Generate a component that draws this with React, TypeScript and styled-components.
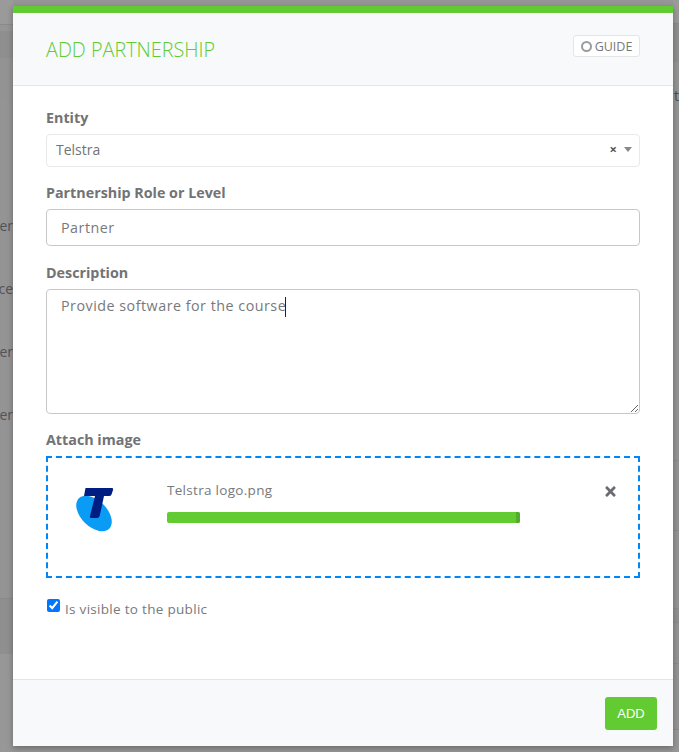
import React from "react";
import styled, { createGlobalStyle } from "styled-components";
import { FaTimes } from "react-icons/fa";

const GlobalStyle = createGlobalStyle`
    html, body {
        margin: 0;
        padding: 0;
        height: 100%;
        overflow: hidden;
        background: #999;
        font-family: "Open Sans", "Liberation Sans", sans-serif;
    }
`;

const Backdrop = styled.div`
    position: relative;
    width: 679px;
    height: 752px;
    overflow: hidden;
    background: #969696;
    display: flex;
    justify-content: space-between;
`;

const PageColumn = styled.div<{ $w: number }>`
    width: ${(p) => p.$w}px;
    display: flex;
    flex-direction: column;
    overflow: hidden;
`;

const Band = styled.div<{ $h: number; $bg: string; $line?: boolean }>`
    height: ${(p) => p.$h}px;
    flex: none;
    box-sizing: border-box;
    background: ${(p) => p.$bg};
    border-top: ${(p) => (p.$line ? "1px solid #8a8a8a" : "0")};
`;

const PageLine = styled.div<{ $h: number }>`
    height: ${(p) => p.$h}px;
    flex: none;
    background: #949494;
    display: flex;
    justify-content: flex-end;
    align-items: flex-end;
    font-size: 14px;
    line-height: 20px;
    white-space: nowrap;
    color: #50535a;
`;

const RightLine = styled(PageLine)`
    justify-content: flex-start;
    padding-left: 1px;
    color: #4a4d55;
`;

const Modal = styled.div`
    position: absolute;
    left: 13px;
    top: 6px;
    width: 660px;
    height: 740px;
    box-sizing: border-box;
    background: #fff;
    border-top: 7px solid #62cb31;
    box-shadow: 0 2px 6px rgba(0, 0, 0, 0.3);
    display: flex;
    flex-direction: column;
`;

const Header = styled.div`
    height: 73px;
    box-sizing: border-box;
    background: #f7f9fa;
    border-bottom: 1px solid #e4e5e7;
    padding: 0 33px;
    display: flex;
    justify-content: space-between;
    align-items: flex-start;
`;

const Title = styled.h4`
    margin: 23px 0 0;
    font-size: 19.8px;
    line-height: 27px;
    font-weight: 300;
    color: #62cb31;
`;

const GuideButton = styled.button`
    margin-top: 22px;
    width: 67px;
    height: 22px;
    padding: 0;
    background: #fff;
    border: 1px solid #e4e5e7;
    border-radius: 3px;
    font-family: inherit;
    font-size: 12.5px;
    color: #77797c;
    display: flex;
    align-items: center;
    justify-content: center;
    gap: 3px;
`;

const GuideDot = styled.span`
    width: 7px;
    height: 7px;
    border: 2px solid #9a9b9d;
    border-radius: 50%;
`;

const Body = styled.div`
    flex: 1;
    padding: 0 33px;
    display: flex;
    flex-direction: column;
`;

const Label = styled.label`
    display: block;
    height: 19px;
    margin-top: 16px;
    margin-bottom: 7px;
    font-size: 14.3px;
    line-height: 19px;
    font-weight: 700;
    color: #717376;
`;

const FirstLabel = styled(Label)`
    margin-top: 22px;
`;

const DescriptionLabel = styled(Label)`
    margin-top: 17px;
`;

const SelectBox = styled.div`
    height: 33px;
    box-sizing: border-box;
    border: 1px solid #e9e9e9;
    border-radius: 4px;
    padding: 0 7px 2px 9px;
    display: flex;
    align-items: center;
    font-size: 14px;
    color: #717376;
`;

const SelectValue = styled.span`
    flex: 1;
`;

const ClearMark = styled.span`
    font-size: 13px;
    font-weight: 700;
    line-height: 1;
    color: #555;
    margin-right: 7px;
`;

const CaretDown = styled.span`
    width: 0;
    height: 0;
    border-left: 4px solid transparent;
    border-right: 4px solid transparent;
    border-top: 5px solid #888;
`;

const TextInput = styled.input`
    display: block;
    width: 100%;
    height: 37px;
    box-sizing: border-box;
    padding: 0 14px;
    border: 1px solid #c8c8c8;
    border-radius: 4px;
    outline: none;
    font-family: inherit;
    font-size: 14.3px;
    letter-spacing: 0.5px;
    color: #77797c;
`;

const AreaWrap = styled.div`
    position: relative;
    height: 125px;
`;

const TextArea = styled.textarea`
    display: block;
    width: 100%;
    height: 125px;
    box-sizing: border-box;
    padding: 4px 14px;
    border: 1px solid #c8c8c8;
    border-radius: 4px;
    outline: none;
    font-family: inherit;
    font-size: 14.3px;
    letter-spacing: 0.5px;
    line-height: 24px;
    color: #77797c;
`;

const TextCaret = styled.span`
    position: absolute;
    left: 239px;
    top: 8px;
    width: 1px;
    height: 20px;
    background: #222;
`;

const DropZone = styled.div`
    height: 122px;
    box-sizing: border-box;
    border: 2px dashed #0087f7;
    display: flex;
    align-items: flex-start;
`;

const Thumb = styled.svg`
    width: 40px;
    height: 46px;
    margin: 29px 0 0 27px;
    flex: none;
`;

const FileBlock = styled.div`
    margin: 23px 0 0 52px;
    width: 353px;
    flex: none;
`;

const FileName = styled.div`
    font-size: 13.5px;
    letter-spacing: 0.3px;
    line-height: 18px;
    color: #77797c;
`;

const Progress = styled.div`
    margin-top: 13px;
    height: 11px;
    border-radius: 2px;
    background: #62cb31;
    overflow: hidden;
    display: flex;
    justify-content: flex-end;
`;

const ProgressEnd = styled.span`
    width: 4px;
    background: #52ad28;
`;

const RemoveButton = styled.button`
    margin: 26px 0 0 83px;
    padding: 0;
    border: 0;
    background: none;
    color: #6a6c6f;
    display: flex;
`;

const CheckRow = styled.label`
    margin-top: 21px;
    display: flex;
    align-items: flex-start;
    font-size: 13.5px;
    letter-spacing: 0.3px;
    line-height: 20px;
    color: #77797c;
`;

const CheckBox = styled.input`
    width: 13px;
    height: 13px;
    margin: 0 5px 0 1px;
    accent-color: #0075ff;
`;

const Footer = styled.div`
    height: 67px;
    box-sizing: border-box;
    background: #f7f9fa;
    border-top: 1px solid #e4e5e7;
    padding: 17px 16px 0 0;
    display: flex;
    justify-content: flex-end;
    align-items: flex-start;
`;

const AddButton = styled.button`
    width: 52px;
    height: 33px;
    padding: 0;
    background: #62cb31;
    border: 0;
    border-radius: 3px;
    font-family: "Liberation Sans", Arial, sans-serif;
    font-size: 13px;
    color: #fff;
`;

const TelstraLogo = () => (
    <Thumb viewBox="0 0 40 46">
        <ellipse cx="19" cy="26.5" rx="21.5" ry="13" fill="#0a9bf5" transform="rotate(45 19 26.5)" />
        <path
            d="M10.5 1 H37 Q38.5 1 38 3 L36.5 7.5 Q36 9 34 9 H29 L24.8 28.5 Q24.2 31 22 31 H16 Q14.6 31 15 29 L20 9 H9 Z"
            fill="#001e82"
        />
    </Thumb>
);

const App = () => {
    return (
        <Backdrop>
            <GlobalStyle />
            <PageColumn $w={13}>
                <Band $h={24} $bg="#9a9a9a" />
                <Band $h={7} $bg="#959595" $line />
                <Band $h={27} $bg="#8f8f8f" />
                <Band $h={41} $bg="#939393" />
                <PageLine $h={137}>er</PageLine>
                <PageLine $h={63}>ce</PageLine>
                <PageLine $h={63}>er</PageLine>
                <PageLine $h={63}>er</PageLine>
                <PageLine $h={173} />
                <Band $h={56} $bg="#8f8f8f" $line />
                <Band $h={98} $bg="#979797" />
            </PageColumn>
            <PageColumn $w={6}>
                <Band $h={23} $bg="#9a9a9a" />
                <Band $h={39} $bg="#8f8f8f" $line />
                <RightLine $h={44}>t</RightLine>
                <PageLine $h={354} />
                <Band $h={70} $bg="#929292" $line />
                <Band $h={78} $bg="#949494" $line />
                <Band $h={14} $bg="#909090" $line />
                <Band $h={41} $bg="#949494" $line />
                <Band $h={66} $bg="#949494" $line />
                <Band $h={23} $bg="#979797" $line />
            </PageColumn>
            <Modal>
                <Header>
                    <Title>ADD PARTNERSHIP</Title>
                    <GuideButton type="button">
                        <GuideDot />
                        GUIDE
                    </GuideButton>
                </Header>
                <Body>
                    <FirstLabel>Entity</FirstLabel>
                    <SelectBox>
                        <SelectValue>Telstra</SelectValue>
                        <ClearMark>×</ClearMark>
                        <CaretDown />
                    </SelectBox>
                    <Label>Partnership Role or Level</Label>
                    <TextInput defaultValue="Partner" />
                    <DescriptionLabel>Description</DescriptionLabel>
                    <AreaWrap>
                        <TextArea defaultValue="Provide software for the course" />
                        <TextCaret />
                    </AreaWrap>
                    <Label>Attach image</Label>
                    <DropZone>
                        <TelstraLogo />
                        <FileBlock>
                            <FileName>Telstra logo.png</FileName>
                            <Progress>
                                <ProgressEnd />
                            </Progress>
                        </FileBlock>
                        <RemoveButton type="button">
                            <FaTimes size={15} />
                        </RemoveButton>
                    </DropZone>
                    <CheckRow>
                        <CheckBox type="checkbox" defaultChecked />
                        Is visible to the public
                    </CheckRow>
                </Body>
                <Footer>
                    <AddButton type="button">ADD</AddButton>
                </Footer>
            </Modal>
        </Backdrop>
    );
};

export default App;
